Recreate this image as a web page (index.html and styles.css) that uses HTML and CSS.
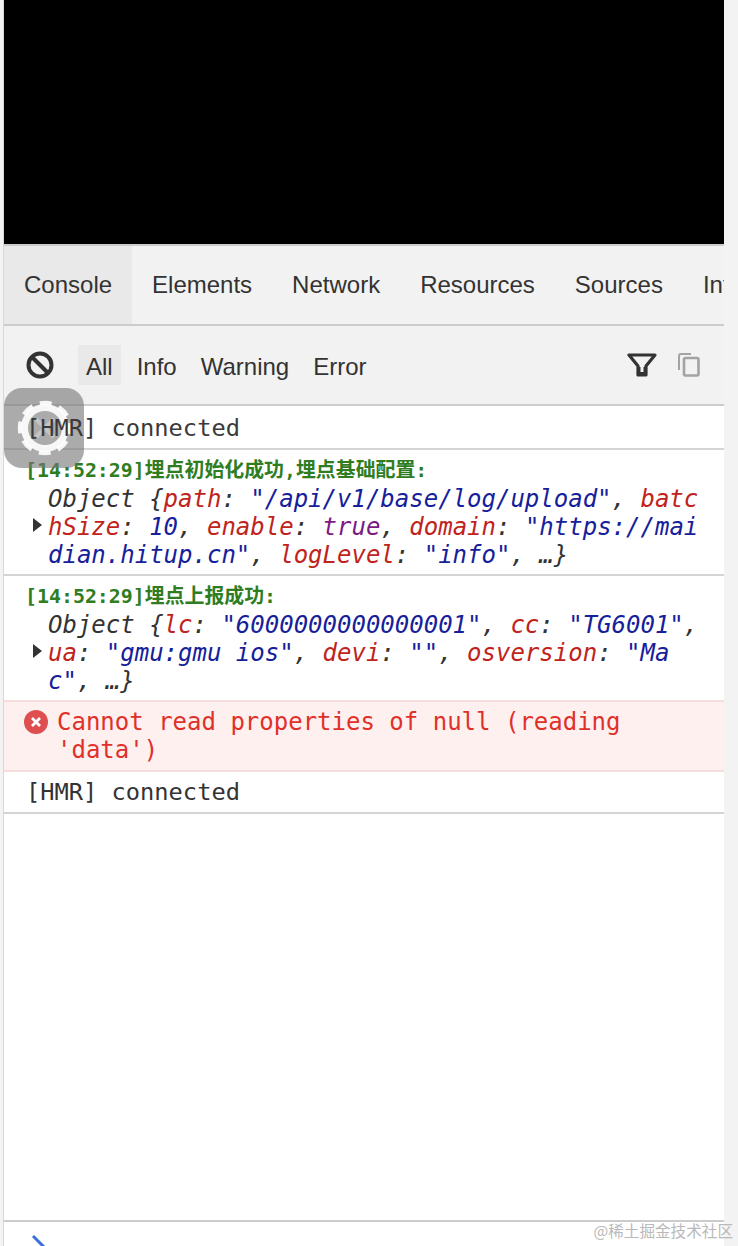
FILE: index.html
```html
<!DOCTYPE html>
<html lang="en">
<head>
<meta charset="utf-8">
<title>Console</title>
<link rel="stylesheet" href="styles.css">
</head>
<body>
<div class="page">
  <main class="panel">
    <div class="screen"></div>
    <nav class="tabs">
      <span class="tab active">Console</span>
      <span class="tab">Elements</span>
      <span class="tab">Network</span>
      <span class="tab">Resources</span>
      <span class="tab">Sources</span>
      <span class="tab">Info</span>
    </nav>
    <div class="toolbar">
      <svg class="ban" width="28" height="28" viewBox="0 0 28 28"><circle cx="14" cy="14" r="11.5" fill="none" stroke="#333" stroke-width="4"/><path d="M6 6l16 16" stroke="#333" stroke-width="4"/></svg>
      <span class="chip on">All</span>
      <span class="chip">Info</span>
      <span class="chip">Warning</span>
      <span class="chip">Error</span>
      <svg class="funnel" width="30" height="26" viewBox="0 0 30 26"><path d="M2 3h26L19 14v9h-8v-9z" fill="none" stroke="#333" stroke-width="3.2" stroke-linejoin="round"/><path d="M11 15h8v8h-8z" fill="#333"/><path d="M13.5 15h3v5h-3z" fill="#f2f2f2"/></svg>
      <svg class="copy" width="24" height="26" viewBox="0 0 24 26"><path d="M2 18V4a2 2 0 0 1 2-2h10" fill="none" stroke="#a3a3a3" stroke-width="2"/><rect x="7" y="6" width="14.500" height="17.500" rx="1.500" fill="none" stroke="#a3a3a3" stroke-width="2.600"/></svg>
    </div>
    <div class="logs">
      <div class="row plain first"><span class="over">[HMR] connected</span></div>
      <div class="row entry">
        <div class="stamp">[14:52:29]埋点初始化成功,埋点基础配置:</div>
        <div class="obj"><i class="arrow"></i>Object {<span class="k">path</span>: <span class="s">"/api/v1/base/log/upload"</span>, <span class="k">batc<br>hSize</span>: <span class="s">10</span>, <span class="k">enable</span>: <span class="b">true</span>, <span class="k">domain</span>: <span class="s">"https://mai<br>dian.hitup.cn"</span>, <span class="k">logLevel</span>: <span class="s">"info"</span>, …}</div>
      </div>
      <div class="row entry last">
        <div class="stamp">[14:52:29]埋点上报成功:</div>
        <div class="obj"><i class="arrow"></i>Object {<span class="k">lc</span>: <span class="s">"6000000000000001"</span>, <span class="k">cc</span>: <span class="s">"TG6001"</span>,<br><span class="k">ua</span>: <span class="s">"gmu:gmu ios"</span>, <span class="k">devi</span>: <span class="s">""</span>, <span class="k">osversion</span>: <span class="s">"Ma<br>c"</span>, …}</div>
      </div>
      <div class="row error">
        <svg class="err-icon" width="24" height="24" viewBox="0 0 24 24"><circle cx="12" cy="12" r="12" fill="#df4f50"/><path d="M8 8l8 8M16 8l-8 8" stroke="#fff" stroke-width="2.800"/></svg>
        <div>Cannot read properties of null (reading<br>'data')</div>
      </div>
      <div class="row plain">[HMR] connected</div>
    </div>
    <div class="prompt">
      <svg width="20" height="26" viewBox="0 0 20 26"><path d="M2 2l12 12" stroke="#3b6fd8" stroke-width="3" fill="none"/></svg>
    </div>
  </main>
  <div class="float-btn">
    <svg width="60" height="60" viewBox="0 0 60 60"><circle cx="30" cy="30" r="20.500" fill="none" stroke="#fff" stroke-opacity=".9" stroke-width="7"/><circle cx="30" cy="30" r="25" fill="none" stroke="#fff" stroke-opacity=".9" stroke-width="4.500" stroke-dasharray="12 7.635" stroke-dashoffset="6"/><path d="M21 21l18 18M39 21L21 39" stroke="#fff" stroke-opacity=".3" stroke-width="4"/></svg>
  </div>
  <span class="mark">@稀土掘金技术社区</span>
</div>
</body>
</html>
```

FILE: styles.css
```css
* { box-sizing: border-box; }
html, body { margin: 0; height: 1246px; overflow: hidden; background: #fff; }
.page {
  position: relative;
  height: 1246px;
  padding: 0 14px 0 4px;
  background: #f3f3f3;
}
.page::before {
  content: "";
  position: absolute;
  left: 3px; top: 0; bottom: 0;
  width: 1px;
  background: #d8d8d8;
}
.panel {
  height: 1246px;
  display: flex;
  flex-direction: column;
  overflow: hidden;
  background: #fff;
  font-family: "DejaVu Sans Mono", "Noto Sans CJK SC", monospace;
  color: #333;
}
.screen { height: 244px; flex: none; background: #000; }
.tabs {
  flex: none;
  height: 82px;
  display: flex;
  background: #f2f2f2;
  border-top: 2px solid #ccc;
  border-bottom: 2px solid #ccc;
  font: 24px "Liberation Sans", Arial, sans-serif;
  color: #333;
  white-space: nowrap;
  overflow: hidden;
}
.tab { flex: none; padding: 25px 20px 0; height: 80px; }
.tab.active { background: #e9e9e9; border-bottom: 2px solid #3b78e0; }
.toolbar {
  flex: none;
  height: 80px;
  display: flex;
  align-items: center;
  background: #f2f2f2;
  border-bottom: 2px solid #ccc;
  font: 24px "Liberation Sans", Arial, sans-serif;
  color: #333;
  padding-left: 22px;
}
.ban { flex: none; margin-right: 24px; }
.chip { height: 40px; line-height: 44px; padding: 0 8px; margin-right: 8px; }
.chip.on { background: #e9e9e9; }
.funnel { margin-left: auto; margin-right: 20px; }
.copy { margin-right: 23px; }
.logs { flex: 1; min-height: 0; }
.row { border-bottom: 2px solid #d4d4d4; }
.plain { height: 42px; padding: 4px 0 0 22px; font-size: 23.700px; line-height: 32px; }
.plain.first { height: 44px; padding-top: 6px; }
.over { position: relative; z-index: 2; color: #3a3a3a; }
.entry { padding: 7px 0 5px 21px; }
.entry.last { border-bottom: 0; }
.stamp { font-size: 19.900px; line-height: 28px; font-weight: 700; color: #2f7d1f; }
.obj {
  position: relative;
  padding-left: 23px;
  font-size: 24px;
  line-height: 28px;
  font-style: italic;
  white-space: nowrap;
}
.arrow {
  position: absolute;
  left: 8px; top: 33px;
  border-left: 9px solid #333;
  border-top: 7.500px solid transparent;
  border-bottom: 7.500px solid transparent;
}
.k { color: #bf231b; }
.s { color: #16209a; }
.b { color: #7b1a85; }
.error {
  display: flex;
  height: 72px;
  padding: 6px 0 0 20px;
  background: #fdf0ef;
  border-top: 2px solid #f7dcdc;
  border-bottom: 2px solid #f7dcdc;
  color: #e0302a;
  font-size: 24px;
  line-height: 28px;
  white-space: nowrap;
}
.err-icon { flex: none; margin: 2px 9px 0 0; }
.prompt {
  flex: none;
  height: 26px;
  border-top: 2px solid #ccc;
  padding: 12px 0 0 27px;
  overflow: hidden;
}
.float-btn {
  position: absolute;
  left: 4px; top: 388px;
  width: 80px; height: 80px;
  border-radius: 18px;
  background: rgba(120,120,120,.62);
  display: flex;
  align-items: center;
  justify-content: center;
  padding-left: 2px;
}
.mark {
  position: absolute;
  right: 5px; top: 1219px;
  font: 15.600px "Noto Sans CJK SC", sans-serif;
  color: #b9b9b9;
  white-space: nowrap;
}
```
